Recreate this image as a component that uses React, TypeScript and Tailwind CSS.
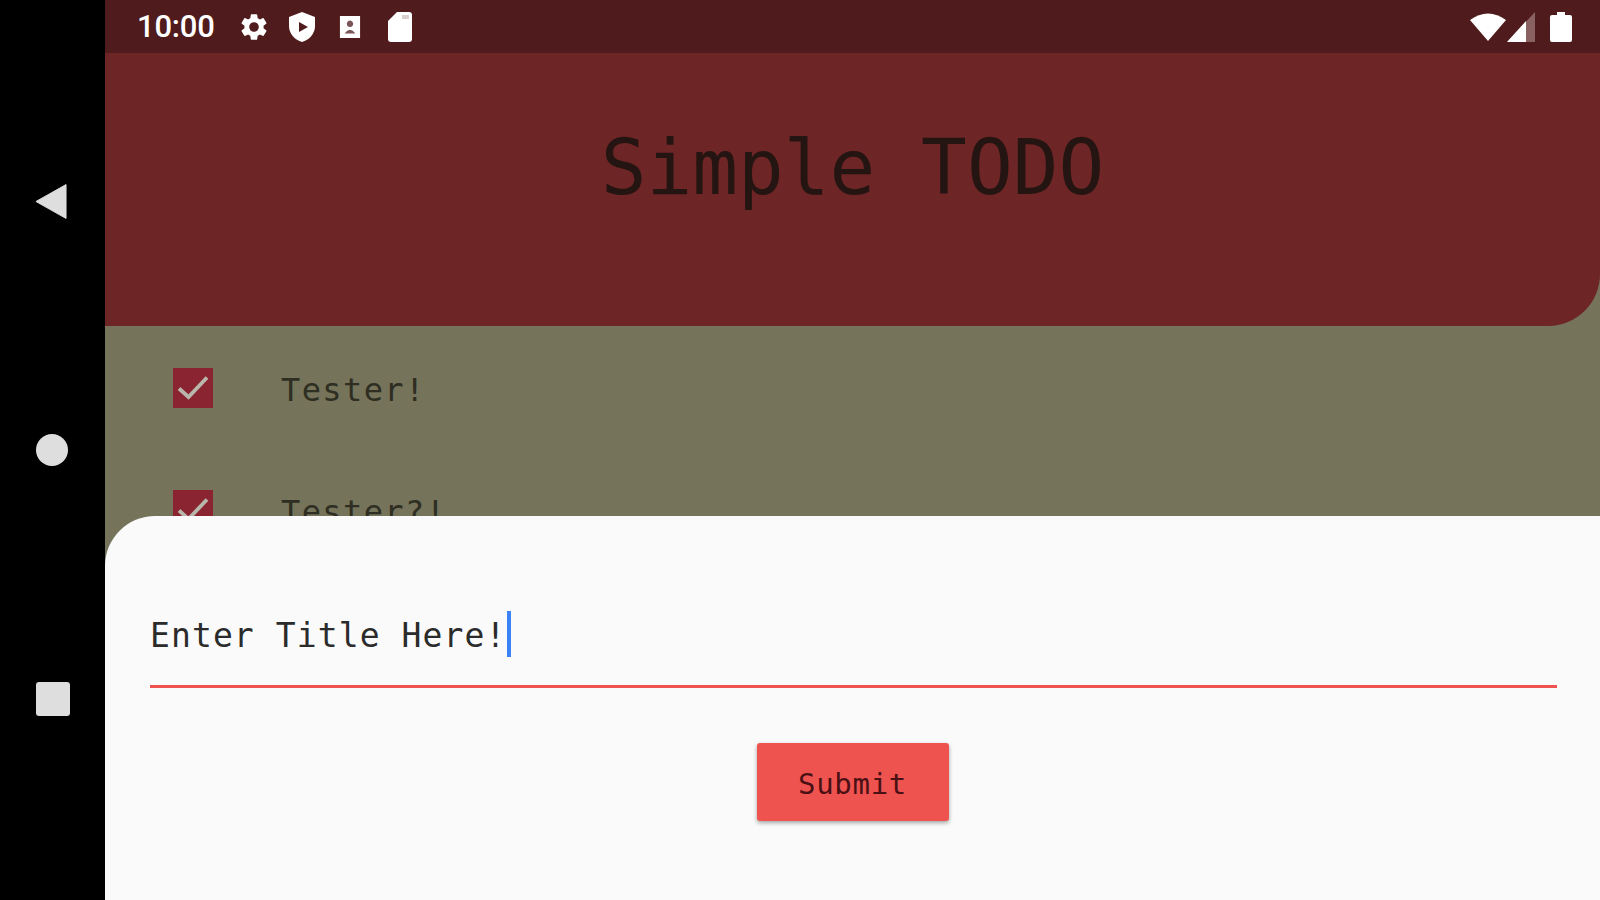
const mono = { fontFamily: '"DejaVu Sans Mono", monospace' };

function Row({ label, className }: { label: string; className: string }) {
  return (
    <div className={`flex items-start ${className}`}>
      <div className="flex h-10 w-10 items-center justify-center bg-[#8a2430]">
        <svg width="40" height="40" viewBox="0 0 40 40" fill="none">
          <path d="M6 20.5 L15.5 29 L34 9.5" stroke="#b9b6ab" strokeWidth="3.8" />
        </svg>
      </div>
      <span className="ml-[68px] pt-[2px] text-[32px] leading-10 tracking-[1.4px] text-[#2e2e22]" style={mono}>{label}</span>
    </div>
  );
}

export default function App() {
  return (
    <div className="flex h-[900px] w-[1600px] overflow-hidden bg-black">
      <nav className="flex w-[105px] shrink-0 flex-col items-center pt-[183px]">
        <svg width="32" height="37" viewBox="0 0 34 38" className="ml-[-4px]">
          <path d="M33 1 V37 L1 19 Z" fill="#dedede" stroke="#dedede" strokeLinejoin="round" />
        </svg>
        <div className="ml-[-2px] mt-[214px] h-8 w-8 rounded-full bg-[#dedede]" />
        <div className="mt-[216px] h-[34px] w-[34px] rounded-[3px] bg-[#dedede]" />
      </nav>
      <main className="flex min-w-0 flex-1 flex-col bg-[#75735a]">
        <header className="flex h-[53px] shrink-0 items-center justify-between bg-[#4f1b1c] pl-[32px] pr-[28px]">
          <div className="flex items-center text-white">
            <span className="text-[31px] font-medium leading-none tracking-[-0.2px] [font-family:Roboto,sans-serif]">10:00</span>
            <svg width="32" height="32" viewBox="0 0 24 24" fill="#fff" className="ml-[23px]">
              <path d="M19.14 12.94c.04-.3.06-.61.06-.94s-.02-.64-.07-.94l2.03-1.58a.49.49 0 0 0 .12-.61l-1.92-3.32a.49.49 0 0 0-.59-.22l-2.39.96a7 7 0 0 0-1.62-.94l-.36-2.54a.48.48 0 0 0-.48-.41h-3.84a.47.47 0 0 0-.47.41l-.36 2.54c-.59.24-1.13.57-1.62.94l-2.39-.96a.49.49 0 0 0-.59.22L2.74 8.87a.48.48 0 0 0 .12.61l2.03 1.58c-.05.3-.09.63-.09.94s.02.64.07.94l-2.03 1.58a.49.49 0 0 0-.12.61l1.92 3.32c.12.22.37.29.59.22l2.39-.96c.5.38 1.03.7 1.62.94l.36 2.54c.05.24.24.41.48.41h3.84c.24 0 .44-.17.47-.41l.36-2.54c.59-.24 1.13-.56 1.62-.94l2.39.96c.22.08.47 0 .59-.22l1.92-3.32a.48.48 0 0 0-.12-.61l-2.01-1.58zM12 15.6a3.6 3.6 0 1 1 0-7.2 3.6 3.6 0 0 1 0 7.2z" />
            </svg>
            <svg width="30" height="32" viewBox="0 0 30 32" className="ml-[17px]">
              <path d="M15 1 L28 6 V15 C28 23 22 29 15 31 C8 29 2 23 2 15 V6 Z" fill="#fff" />
              <path d="M12 11 L21 16 L12 21 Z" fill="#4f1b1c" />
            </svg>
            <svg width="22" height="22" viewBox="0 0 22 24" className="ml-[22px]">
              <path d="M0 0 H22 V24 H0 Z" fill="#fff" />
              <path d="M11 5 a3.5 3.5 0 1 1 -.01 0 Z M5 19 Q11 11 17 19 Z" fill="#7a5557" />
            </svg>
            <svg width="24" height="30" viewBox="0 0 24 30" className="ml-[27px]">
              <path d="M9 0 H21 Q24 0 24 3 V27 Q24 30 21 30 H3 Q0 30 0 27 V9 Z" fill="#fff" />
              <path d="M14 3 H21 V7 H14 Z" fill="#d9cfcf" />
            </svg>
          </div>
          <div className="flex items-center">
            <svg width="36" height="28" viewBox="0 0 36 28">
              <path d="M0 7 Q18 -6 36 7 L18 28 Z" fill="#fff" />
            </svg>
            <svg width="28" height="30" viewBox="0 0 28 30" className="ml-[1px]">
              <path d="M28 0 V30 H0 Z" fill="#8a6161" />
              <path d="M19 9 V30 H0 Z" fill="#fff" />
            </svg>
            <svg width="22" height="30" viewBox="0 0 22 30" className="ml-[15px]">
              <path d="M7 3 V0 H15 V3 H20 Q22 3 22 5 V28 Q22 30 20 30 H2 Q0 30 0 28 V5 Q0 3 2 3 Z" fill="#fff" />
            </svg>
          </div>
        </header>
        <section className="flex h-[273px] shrink-0 items-center justify-center rounded-br-[52px] bg-[#6d2525] pb-[44px]">
          <h1 className="text-[76px] font-normal leading-none text-[#241512]" style={mono}>Simple TODO</h1>
        </section>
        <section className="h-[190px] shrink-0 overflow-hidden pl-[68px] pt-[42px]">
          <Row label="Tester!" className="" />
          <Row label="Tester?!" className="mt-[80px]" />
        </section>
        <section className="flex flex-1 flex-col items-center rounded-tl-[50px] bg-[#fafafa] pl-[45px] pr-[43px] pt-[92px]">
          <div className="flex h-[80px] w-full items-center border-b-[3px] border-[#ef5350] pb-[22px]">
            <span className="text-[33px] leading-none tracking-[1.1px] text-[#2b2b2b]" style={mono}>Enter Title Here!</span>
            <span className="ml-[1px] mt-[-4px] h-[46px] w-[4px] bg-[#3b82f6]" />
          </div>
          <button className="ml-[-2px] mt-[55px] flex h-[78px] w-[192px] items-center justify-center rounded-[3px] bg-[#ef5350] pt-[5px] text-[29px] tracking-[0.7px] text-[#4a1014] shadow-[0_2px_4px_rgba(0,0,0,0.35)]" style={mono}>Submit</button>
        </section>
      </main>
    </div>
  );
}
